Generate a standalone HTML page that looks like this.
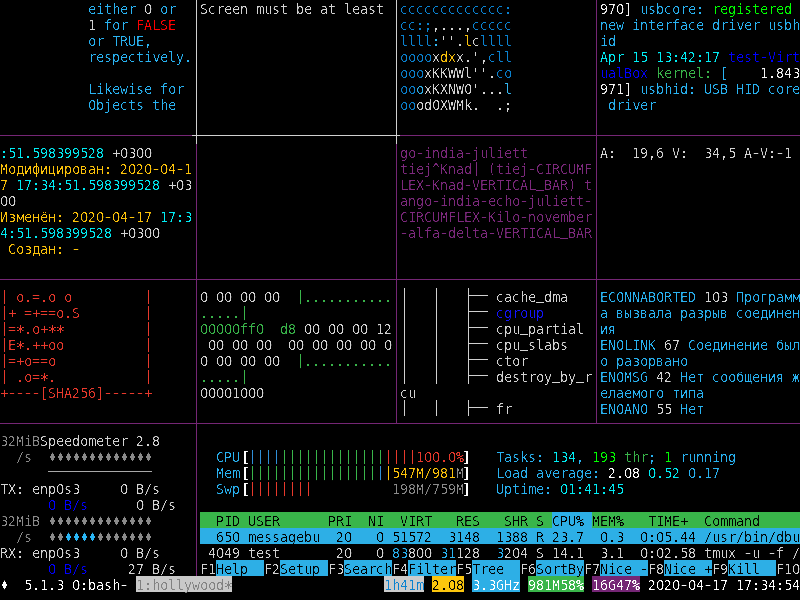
<!DOCTYPE html>
<html lang="en"><head><meta charset="utf-8"><title>hollywood - tmux</title>
<style>
html,body{margin:0;padding:0;background:#000}
body{width:800px;height:600px;overflow:hidden;position:relative;font-family:"DejaVu Sans Mono","Liberation Mono",monospace;font-size:13.29px;}
#g,#t{position:absolute;left:0;top:0;width:800px;height:600px;overflow:hidden}
#g{background:#000}
#t{filter:url(#sh)}
.l{position:absolute;display:block}
.s{position:absolute;display:block;height:16px;line-height:20px;white-space:pre;overflow:visible}
.b{-webkit-text-stroke:.6px currentColor}
.br{margin-left:1.4px}
.brr{margin-left:-1.6px}
.dia{font-size:11.5px;letter-spacing:1.077px;margin-left:1px;transform:translateY(-1.5px) scaleY(1.43);transform-origin:0 9px}
b{font-weight:inherit;position:relative}
.p1{left:.25px}.p2{left:.5px}.m1{left:-.25px}
.bar{left:.5px;top:-1px}
.us{top:-3px;-webkit-text-stroke:.4px currentColor}
.pc{-webkit-text-stroke:.35px currentColor}
.eq{-webkit-text-stroke:.2px currentColor}
.z{font-family:"DejaVu Sans","Liberation Sans",sans-serif;letter-spacing:-.455px}
.ast{font-size:17px;line-height:0;letter-spacing:-2.234px;left:-.7px;top:4.3px}
.hy{display:inline-block;width:8px;transform:scaleX(1.5);transform-origin:4px 0}
</style></head>
<body>
<svg width="0" height="0" style="position:absolute"><defs><filter id="sh" x="0" y="0" width="100%" height="100%" color-interpolation-filters="sRGB"><feComponentTransfer><feFuncA type="linear" slope="4.0" intercept="-2.0"/></feComponentTransfer></filter></defs></svg>
<div id="g">
<i class="l" style="left:196px;top:0px;width:1px;height:144px;background:#d0d0d0"></i>
<i class="l" style="left:196px;top:144px;width:1px;height:432px;background:#752675"></i>
<i class="l" style="left:396px;top:0px;width:1px;height:144px;background:#d0d0d0"></i>
<i class="l" style="left:396px;top:144px;width:1px;height:280px;background:#752675"></i>
<i class="l" style="left:596px;top:0px;width:1px;height:424px;background:#752675"></i>
<i class="l" style="left:0px;top:135px;width:192px;height:1px;background:#752675"></i>
<i class="l" style="left:192px;top:135px;width:208px;height:1px;background:#d0d0d0"></i>
<i class="l" style="left:400px;top:135px;width:400px;height:1px;background:#752675"></i>
<i class="l" style="left:0px;top:279px;width:800px;height:1px;background:#752675"></i>
<i class="l" style="left:0px;top:423px;width:800px;height:1px;background:#752675"></i>
<i class="l" style="left:468px;top:295px;width:20px;height:1px;background:#d0d0d0"></i>
<i class="l" style="left:468px;top:311px;width:20px;height:1px;background:#d0d0d0"></i>
<i class="l" style="left:468px;top:327px;width:20px;height:1px;background:#d0d0d0"></i>
<i class="l" style="left:468px;top:343px;width:20px;height:1px;background:#d0d0d0"></i>
<i class="l" style="left:468px;top:359px;width:20px;height:1px;background:#d0d0d0"></i>
<i class="l" style="left:468px;top:375px;width:20px;height:1px;background:#d0d0d0"></i>
<i class="l" style="left:404px;top:288px;width:1px;height:96px;background:#d0d0d0"></i>
<i class="l" style="left:436px;top:288px;width:1px;height:96px;background:#d0d0d0"></i>
<i class="l" style="left:468px;top:288px;width:1px;height:96px;background:#d0d0d0"></i>
<i class="l" style="left:404px;top:400px;width:1px;height:16px;background:#d0d0d0"></i>
<i class="l" style="left:436px;top:400px;width:1px;height:16px;background:#d0d0d0"></i>
<i class="l" style="left:468px;top:400px;width:1px;height:16px;background:#d0d0d0"></i>
<i class="l" style="left:468px;top:407px;width:20px;height:1px;background:#d0d0d0"></i>
<i class="l" style="left:48px;top:471px;width:104px;height:1px;background:#a8a8a8"></i>
<i class="l" style="left:200px;top:512px;width:352px;height:16px;background:#39b54a"></i>
<i class="l" style="left:552px;top:512px;width:40px;height:16px;background:#2dafe6"></i>
<i class="l" style="left:592px;top:512px;width:208px;height:16px;background:#39b54a"></i>
<i class="l" style="left:200px;top:528px;width:600px;height:16px;background:#2dafe6"></i>
<i class="l" style="left:216px;top:560px;width:48px;height:16px;background:#2dafe6"></i>
<i class="l" style="left:280px;top:560px;width:48px;height:16px;background:#2dafe6"></i>
<i class="l" style="left:344px;top:560px;width:48px;height:16px;background:#2dafe6"></i>
<i class="l" style="left:408px;top:560px;width:48px;height:16px;background:#2dafe6"></i>
<i class="l" style="left:472px;top:560px;width:48px;height:16px;background:#2dafe6"></i>
<i class="l" style="left:536px;top:560px;width:48px;height:16px;background:#2dafe6"></i>
<i class="l" style="left:600px;top:560px;width:48px;height:16px;background:#2dafe6"></i>
<i class="l" style="left:664px;top:560px;width:48px;height:16px;background:#2dafe6"></i>
<i class="l" style="left:728px;top:560px;width:48px;height:16px;background:#2dafe6"></i>
<i class="l" style="left:136px;top:576px;width:96px;height:16px;background:#c9c9c9"></i>
<i class="l" style="left:384px;top:576px;width:40px;height:16px;background:#cccccc"></i>
<i class="l" style="left:432px;top:576px;width:32px;height:16px;background:#fcc60d"></i>
<i class="l" style="left:472px;top:576px;width:48px;height:16px;background:#2dafe6"></i>
<i class="l" style="left:528px;top:576px;width:56px;height:16px;background:#39b54a"></i>
<i class="l" style="left:592px;top:576px;width:48px;height:16px;background:#752675"></i>
</div>
<div id="t">
<div class="r"><span class="s" style="left:88px;top:0px;color:#29b3f2"><b class="p1">ei</b>t<b class="p2">h</b><b class="p1">e</b><b class="p2">r</b> </span><span class="s" style="left:144px;top:0px;color:#d3d3d3"><b class="z">0</b></span><span class="s" style="left:152px;top:0px;color:#29b3f2"> <b class="p1">o</b><b class="p2">r</b></span></div>
<div class="r"><span class="s" style="left:88px;top:16px;color:#d3d3d3">1</span><span class="s" style="left:96px;top:16px;color:#29b3f2"> f<b class="p1">o</b><b class="p2">r</b> </span><span class="s" style="left:136px;top:16px;color:#ff0000"><b class="p1">F</b>A<b class="p2">L</b>SE</span></div>
<div class="r"><span class="s" style="left:88px;top:32px;color:#29b3f2"><b class="p1">o</b><b class="p2">r</b> <b class="p2">T</b>RUE,</span></div>
<div class="r"><span class="s" style="left:88px;top:48px;color:#29b3f2"><b class="p2">r</b><b class="p1">e</b>sp<b class="p1">e</b><b class="m1">c</b>t<b class="p1">i</b><b class="p2">v</b><b class="p1">e</b>ly.</span></div>
<div class="r"><span class="s" style="left:88px;top:80px;color:#29b3f2"><b class="p2">L</b><b class="p1">ike</b>w<b class="p1">i</b>s<b class="p1">e</b> f<b class="p1">o</b><b class="p2">r</b></span></div>
<div class="r"><span class="s" style="left:88px;top:96px;color:#29b3f2"><b class="p1">O</b>bj<b class="p1">e</b><b class="m1">c</b>ts t<b class="p2">h</b><b class="p1">e</b></span></div>
<div class="r"><span class="s" style="left:200px;top:0px;color:#d3d3d3">S<b class="m1">c</b><b class="p2">r</b><b class="p1">ee</b>n <b class="p2">mu</b>st b<b class="p1">e</b> at l<b class="p1">e</b>ast</span></div>
<div class="r"><span class="s" style="left:400px;top:0px;color:#0a82d0"><b class="m1">ccccccccccccc</b>:</span></div>
<div class="r"><span class="s" style="left:400px;top:16px;color:#0a82d0"><b class="m1">cc</b>:;</span><span class="s" style="left:432px;top:16px;color:#d3d3d3">,...,</span><span class="s" style="left:472px;top:16px;color:#0a82d0"><b class="m1">ccccc</b></span></div>
<div class="r"><span class="s" style="left:400px;top:32px;color:#0a82d0">llll</span><span class="s" style="left:432px;top:32px;color:#33b5ee">:</span><span class="s" style="left:440px;top:32px;color:#d3d3d3"><b class="m1">&#x27;&#x27;</b>.</span><span class="s" style="left:464px;top:32px;color:#fdc30a">l</span><span class="s" style="left:472px;top:32px;color:#d3d3d3"><b class="m1">c</b></span><span class="s" style="left:480px;top:32px;color:#0a82d0">llll</span></div>
<div class="r"><span class="s" style="left:400px;top:48px;color:#0a82d0"><b class="p1">oooo</b></span><span class="s" style="left:432px;top:48px;color:#d3d3d3">x</span><span class="s" style="left:440px;top:48px;color:#fdc30a">dx</span><span class="s" style="left:456px;top:48px;color:#d3d3d3">x.<b class="m1">&#x27;</b>,</span><span class="s" style="left:488px;top:48px;color:#0a82d0"><b class="m1">c</b>ll</span></div>
<div class="r"><span class="s" style="left:400px;top:64px;color:#0a82d0"><b class="p1">ooo</b></span><span class="s" style="left:424px;top:64px;color:#d3d3d3">x<b class="m1">KK</b>WWl<b class="m1">&#x27;&#x27;</b>.</span><span class="s" style="left:496px;top:64px;color:#0a82d0"><b class="m1">c</b><b class="p1">o</b></span></div>
<div class="r"><span class="s" style="left:400px;top:80px;color:#0a82d0"><b class="p1">oo</b></span><span class="s" style="left:416px;top:80px;color:#33b5ee"><b class="p1">o</b></span><span class="s" style="left:424px;top:80px;color:#d3d3d3">x<b class="m1">K</b>XNW<b class="p1">O</b><b class="m1">&#x27;</b>...</span><span class="s" style="left:504px;top:80px;color:#33b5ee">l</span></div>
<div class="r"><span class="s" style="left:400px;top:96px;color:#0a82d0"><b class="p1">oo</b></span><span class="s" style="left:416px;top:96px;color:#d3d3d3"><b class="p1">o</b>d<b class="p1">O</b>XWM<b class="p1">k</b>.  .;</span></div>
<div class="r"><span class="s" style="left:600px;top:0px;color:#f4f4f4">97<b class="z">0</b>]</span><span class="s" style="left:632px;top:0px;color:#29b3f2"> <b class="p2">u</b>sb<b class="m1">c</b><b class="p1">o</b><b class="p2">r</b><b class="p1">e</b>: </span><span class="s" style="left:712px;top:0px;color:#00ff00"><b class="p2">r</b><b class="p1">e</b>g<b class="p1">i</b>st<b class="p1">e</b><b class="p2">r</b><b class="p1">e</b>d</span></div>
<div class="r"><span class="s" style="left:600px;top:16px;color:#29b3f2">n<b class="p1">e</b>w <b class="p1">i</b>nt<b class="p1">e</b><b class="p2">r</b>fa<b class="m1">c</b><b class="p1">e</b> d<b class="p2">r</b><b class="p1">i</b><b class="p2">v</b><b class="p1">e</b><b class="p2">r</b> <b class="p2">u</b>sb<b class="p2">h</b></span></div>
<div class="r"><span class="s" style="left:600px;top:32px;color:#29b3f2"><b class="p1">i</b>d</span></div>
<div class="r"><span class="s" style="left:600px;top:48px;color:#00ecf4">Ap<b class="p2">r</b> 1<b class="p2">5</b> 1<b class="p2">3</b>:4<b class="m1">2</b>:17</span><span class="s" style="left:720px;top:48px;color:#0000ff"> t<b class="p1">e</b>st<b class="hy">-</b>V<b class="p1">i</b><b class="p2">r</b>t</span></div>
<div class="r"><span class="s" style="left:600px;top:64px;color:#0000ff"><b class="p2">u</b>alB<b class="p1">o</b>x</span><span class="s" style="left:648px;top:64px;color:#39b54a"> <b class="p1">ke</b><b class="p2">r</b>n<b class="p1">e</b>l:</span><span class="s" style="left:712px;top:64px;color:#29b3f2"> [</span><span class="s" style="left:728px;top:64px;color:#f4f4f4">    1.84<b class="p2">3</b></span></div>
<div class="r"><span class="s" style="left:600px;top:80px;color:#f4f4f4">971]</span><span class="s" style="left:632px;top:80px;color:#29b3f2"> <b class="p2">u</b>sb<b class="p2">h</b><b class="p1">i</b>d: USB H<b class="p2">I</b>D <b class="m1">c</b><b class="p1">o</b><b class="p2">r</b><b class="p1">e</b></span></div>
<div class="r"><span class="s" style="left:600px;top:96px;color:#29b3f2"> d<b class="p2">r</b><b class="p1">i</b><b class="p2">v</b><b class="p1">e</b><b class="p2">r</b></span></div>
<div class="r"><span class="s" style="left:0px;top:144px;color:#00ecf4">:<b class="p2">5</b>1.<b class="p2">5</b>98<b class="p2">3</b>99<b class="p2">5</b><b class="m1">2</b>8</span><span class="s" style="left:104px;top:144px;color:#d3d3d3"> <b class="p2">+</b><b class="z">0</b><b class="p2">3</b><b class="z">00</b></span></div>
<div class="r"><span class="s" style="left:0px;top:160px;color:#fdc30a">М<b class="p1">о</b><b class="p2">д</b>и<b class="p1">ф</b>ицир<b class="p1">о</b><b class="m1">в</b>ан: <b class="m1">2</b><b class="z">0</b><b class="m1">2</b><b class="z">0</b><b class="hy">-</b><b class="z">0</b>4<b class="hy">-</b>1</span></div>
<div class="r"><span class="s" style="left:0px;top:176px;color:#fdc30a">7</span><span class="s" style="left:8px;top:176px;color:#00ecf4"> 17:<b class="p2">3</b>4:<b class="p2">5</b>1.<b class="p2">5</b>98<b class="p2">3</b>99<b class="p2">5</b><b class="m1">2</b>8</span><span class="s" style="left:160px;top:176px;color:#d3d3d3"> <b class="p2">+</b><b class="z">0</b><b class="p2">3</b></span></div>
<div class="r"><span class="s" style="left:0px;top:192px;color:#d3d3d3"><b class="z">00</b></span></div>
<div class="r"><span class="s" style="left:0px;top:208px;color:#fdc30a">И<b class="p1">з</b><b class="p2">м</b><b class="p1">е</b>н<b class="p1">ё</b>н: <b class="m1">2</b><b class="z">0</b><b class="m1">2</b><b class="z">0</b><b class="hy">-</b><b class="z">0</b>4<b class="hy">-</b>17</span><span class="s" style="left:152px;top:208px;color:#00ecf4"> 17:<b class="p2">3</b></span></div>
<div class="r"><span class="s" style="left:0px;top:224px;color:#00ecf4">4:<b class="p2">5</b>1.<b class="p2">5</b>98<b class="p2">3</b>99<b class="p2">5</b><b class="m1">2</b>8</span><span class="s" style="left:112px;top:224px;color:#d3d3d3"> <b class="p2">+</b><b class="z">0</b><b class="p2">3</b><b class="z">00</b></span></div>
<div class="r"><span class="s" style="left:0px;top:240px;color:#fdc30a"> С<b class="p1">оз</b><b class="p2">д</b>ан: <b class="hy">-</b></span></div>
<div class="r"><span class="s" style="left:400px;top:144px;color:#7d297d">g<b class="p1">o</b><b class="hy">-</b><b class="p1">i</b>nd<b class="p1">i</b>a<b class="hy">-</b>j<b class="p2">u</b>l<b class="p1">ie</b>tt</span></div>
<div class="r"><span class="s" style="left:400px;top:160px;color:#7d297d">t<b class="p1">ie</b>j^<b class="m1">K</b>nad<b class="bar">|</b> <b class="m1">(</b>t<b class="p1">ie</b>j<b class="hy">-</b>C<b class="p2">I</b>RCUM<b class="p1">F</b></span></div>
<div class="r"><span class="s" style="left:400px;top:176px;color:#7d297d"><b class="p2">L</b>EX<b class="hy">-</b><b class="m1">K</b>nad<b class="hy">-</b>VER<b class="p2">TI</b>CA<b class="p2">L</b><b class="us">_</b>BAR<b class="p1">)</b> t</span></div>
<div class="r"><span class="s" style="left:400px;top:192px;color:#7d297d">ang<b class="p1">o</b><b class="hy">-</b><b class="p1">i</b>nd<b class="p1">i</b>a<b class="hy">-</b><b class="p1">e</b><b class="m1">c</b><b class="p2">h</b><b class="p1">o</b><b class="hy">-</b>j<b class="p2">u</b>l<b class="p1">ie</b>tt<b class="hy">-</b></span></div>
<div class="r"><span class="s" style="left:400px;top:208px;color:#7d297d">C<b class="p2">I</b>RCUM<b class="p1">F</b><b class="p2">L</b>EX<b class="hy">-</b><b class="m1">K</b><b class="p1">i</b>l<b class="p1">o</b><b class="hy">-</b>n<b class="p1">o</b><b class="p2">v</b><b class="p1">e</b><b class="p2">m</b>b<b class="p1">e</b><b class="p2">r</b></span></div>
<div class="r"><span class="s" style="left:400px;top:224px;color:#7d297d"><b class="hy">-</b>alfa<b class="hy">-</b>d<b class="p1">e</b>lta<b class="hy">-</b>VER<b class="p2">TI</b>CA<b class="p2">L</b><b class="us">_</b>BAR</span></div>
<div class="r"><span class="s" style="left:600px;top:144px;color:#d3d3d3">A:  19,6 V:  <b class="p2">3</b>4,<b class="p2">5</b> A<b class="hy">-</b>V:<b class="hy">-</b>1</span></div>
<div class="r"><span class="s" style="left:0px;top:288px;color:#e8392c"><b class="bar">|</b> <b class="p1">o</b>.<b class="eq">=</b>.<b class="p1">o</b> <b class="p1">o</b>         <b class="bar">|</b></span></div>
<div class="r"><span class="s" style="left:0px;top:304px;color:#e8392c"><b class="bar">|</b><b class="p2">+</b> <b class="eq">=</b><b class="p2">+</b><b class="eq">==</b><b class="p1">o</b>.S        <b class="bar">|</b></span></div>
<div class="r"><span class="s" style="left:0px;top:320px;color:#e8392c"><b class="bar">|</b><b class="eq">=</b><b class="ast">*</b>.<b class="p1">o</b><b class="p2">+</b><b class="ast">**</b>          <b class="bar">|</b></span></div>
<div class="r"><span class="s" style="left:0px;top:336px;color:#e8392c"><b class="bar">|</b>E<b class="ast">*</b>.<b class="p2">++</b><b class="p1">oo</b>          <b class="bar">|</b></span></div>
<div class="r"><span class="s" style="left:0px;top:352px;color:#e8392c"><b class="bar">|</b><b class="eq">=</b><b class="p2">+</b><b class="p1">o</b><b class="eq">==</b><b class="p1">o</b>           <b class="bar">|</b></span></div>
<div class="r"><span class="s" style="left:0px;top:368px;color:#e8392c"><b class="bar">|</b> .<b class="p1">o</b><b class="eq">=</b><b class="ast">*</b>.           <b class="bar">|</b></span></div>
<div class="r"><span class="s" style="left:0px;top:384px;color:#e8392c"><b class="p2">+</b><b class="hy">-</b><b class="hy">-</b><b class="hy">-</b><b class="hy">-</b>[SHA<b class="m1">2</b><b class="p2">5</b>6]<b class="hy">-</b><b class="hy">-</b><b class="hy">-</b><b class="hy">-</b><b class="hy">-</b><b class="p2">+</b></span></div>
<div class="r"><span class="s" style="left:200px;top:288px;color:#d3d3d3"><b class="z">0</b> <b class="z">00</b> <b class="z">00</b> <b class="z">00</b>  </span><span class="s" style="left:296px;top:288px;color:#39b54a"><b class="bar">|</b>...........</span></div>
<div class="r"><span class="s" style="left:200px;top:304px;color:#39b54a">.....<b class="bar">|</b></span></div>
<div class="r"><span class="s" style="left:200px;top:320px;color:#39b54a"><b class="z">00000</b>ff<b class="z">0</b>  d8</span><span class="s" style="left:296px;top:320px;color:#d3d3d3"> <b class="z">00</b> <b class="z">00</b> <b class="z">00</b> 1<b class="m1">2</b></span></div>
<div class="r"><span class="s" style="left:200px;top:336px;color:#d3d3d3"> <b class="z">00</b> <b class="z">00</b> <b class="z">00</b>  <b class="z">00</b> <b class="z">00</b> <b class="z">00</b> <b class="z">00</b> <b class="z">0</b></span></div>
<div class="r"><span class="s" style="left:200px;top:352px;color:#d3d3d3"><b class="z">0</b> <b class="z">00</b> <b class="z">00</b> <b class="z">00</b>  </span><span class="s" style="left:296px;top:352px;color:#39b54a"><b class="bar">|</b>...........</span></div>
<div class="r"><span class="s" style="left:200px;top:368px;color:#39b54a">.....<b class="bar">|</b></span></div>
<div class="r"><span class="s" style="left:200px;top:384px;color:#d3d3d3"><b class="z">0000</b>1<b class="z">000</b></span></div>
<div class="r"><span class="s" style="left:496px;top:288px;color:#d3d3d3"><b class="m1">c</b>a<b class="m1">c</b><b class="p2">h</b><b class="p1">e</b><b class="us">_</b>d<b class="p2">m</b>a</span></div>
<div class="r"><span class="s" style="left:496px;top:304px;color:#1414ff"><b class="m1">c</b>g<b class="p2">r</b><b class="p1">o</b><b class="p2">u</b>p</span></div>
<div class="r"><span class="s" style="left:496px;top:320px;color:#d3d3d3"><b class="m1">c</b>p<b class="p2">u</b><b class="us">_</b>pa<b class="p2">r</b>t<b class="p1">i</b>al</span></div>
<div class="r"><span class="s" style="left:496px;top:336px;color:#d3d3d3"><b class="m1">c</b>p<b class="p2">u</b><b class="us">_</b>slabs</span></div>
<div class="r"><span class="s" style="left:496px;top:352px;color:#d3d3d3"><b class="m1">c</b>t<b class="p1">o</b><b class="p2">r</b></span></div>
<div class="r"><span class="s" style="left:496px;top:368px;color:#d3d3d3">d<b class="p1">e</b>st<b class="p2">r</b><b class="p1">o</b>y<b class="us">_</b>by<b class="us">_</b><b class="p2">r</b></span></div>
<div class="r"><span class="s" style="left:400px;top:384px;color:#d3d3d3"><b class="m1">c</b><b class="p2">u</b></span></div>
<div class="r"><span class="s" style="left:496px;top:400px;color:#d3d3d3">f<b class="p2">r</b></span></div>
<div class="r"><span class="s" style="left:600px;top:288px;color:#29b3f2">EC<b class="p1">O</b>NNAB<b class="p1">O</b>R<b class="p2">T</b>ED</span><span class="s" style="left:696px;top:288px;color:#d3d3d3"> 1<b class="z">0</b><b class="p2">3</b></span><span class="s" style="left:728px;top:288px;color:#29b3f2"> Пр<b class="p1">о</b>гра<b class="p2">мм</b></span></div>
<div class="r"><span class="s" style="left:600px;top:304px;color:#29b3f2">а <b class="m1">в</b>ы<b class="p1">з</b><b class="m1">в</b>ала ра<b class="p1">з</b>ры<b class="m1">в</b> <b class="m1">с</b><b class="p1">ое</b><b class="p2">д</b>ин<b class="p1">е</b>н</span></div>
<div class="r"><span class="s" style="left:600px;top:320px;color:#29b3f2">и<b class="m1">я</b></span></div>
<div class="r"><span class="s" style="left:600px;top:336px;color:#29b3f2">EN<b class="p1">O</b><b class="p2">LI</b>N<b class="m1">K</b></span><span class="s" style="left:656px;top:336px;color:#d3d3d3"> 67</span><span class="s" style="left:680px;top:336px;color:#29b3f2"> С<b class="p1">ое</b><b class="p2">д</b>ин<b class="p1">е</b>ни<b class="p1">е</b> <b class="p1">б</b>ыл</span></div>
<div class="r"><span class="s" style="left:600px;top:352px;color:#29b3f2"><b class="p1">о</b> ра<b class="p1">зо</b>р<b class="m1">в</b>ан<b class="p1">о</b></span></div>
<div class="r"><span class="s" style="left:600px;top:368px;color:#29b3f2">EN<b class="p1">O</b>MSG</span><span class="s" style="left:648px;top:368px;color:#d3d3d3"> 4<b class="m1">2</b></span><span class="s" style="left:672px;top:368px;color:#29b3f2"> Н<b class="p1">ет</b> <b class="m1">с</b><b class="p1">ооб</b><b class="p2">щ</b><b class="p1">е</b>ни<b class="m1">я</b> <b class="m1">ж</b></span></div>
<div class="r"><span class="s" style="left:600px;top:384px;color:#29b3f2"><b class="p1">е</b>ла<b class="p1">е</b><b class="p2">м</b><b class="p1">о</b>г<b class="p1">о</b> <b class="p1">т</b>ипа</span></div>
<div class="r"><span class="s" style="left:600px;top:400px;color:#29b3f2">EN<b class="p1">O</b>AN<b class="p1">O</b></span><span class="s" style="left:648px;top:400px;color:#d3d3d3"> <b class="p2">55</b></span><span class="s" style="left:672px;top:400px;color:#29b3f2"> Н<b class="p1">ет</b></span></div>
<div class="r"><span class="s" style="left:0px;top:432px;color:#8a8a8a"><b class="p2">3</b><b class="m1">2</b>M<b class="p1">i</b>B</span><span class="s" style="left:40px;top:432px;color:#d3d3d3">Sp<b class="p1">ee</b>d<b class="p1">o</b><b class="p2">m</b><b class="p1">e</b>t<b class="p1">e</b><b class="p2">r</b> <b class="m1">2</b>.8</span></div>
<div class="r"><span class="s" style="left:0px;top:448px;color:#8a8a8a">  /s  </span><span class="s dia" style="left:48px;top:448px;color:#8a8a8a">♦♦♦♦♦♦♦♦♦♦♦♦♦</span></div>
<div class="r"><span class="s" style="left:0px;top:480px;color:#d3d3d3"><b class="p2">T</b>X: <b class="p1">e</b>np<b class="z">0</b>s<b class="p2">3</b>     <b class="z">0</b> B/s</span></div>
<div class="r"><span class="s" style="left:0px;top:496px;color:#0000ff">      <b class="z">0</b> B/s</span><span class="s" style="left:88px;top:496px;color:#d3d3d3">      <b class="z">0</b> B/s</span></div>
<div class="r"><span class="s" style="left:0px;top:512px;color:#8a8a8a"><b class="p2">3</b><b class="m1">2</b>M<b class="p1">i</b>B </span><span class="s dia" style="left:48px;top:512px;color:#8a8a8a">♦♦♦♦♦♦♦♦♦♦♦♦♦</span></div>
<div class="r"><span class="s" style="left:0px;top:528px;color:#8a8a8a">  /s  </span><span class="s dia" style="left:48px;top:528px;color:#8a8a8a">♦♦</span><span class="s dia" style="left:64px;top:528px;color:#29b6f6">♦♦♦♦</span><span class="s dia" style="left:96px;top:528px;color:#8a8a8a">♦♦♦♦♦♦♦</span></div>
<div class="r"><span class="s" style="left:0px;top:544px;color:#d3d3d3">RX: <b class="p1">e</b>np<b class="z">0</b>s<b class="p2">3</b>     <b class="z">0</b> B/s</span></div>
<div class="r"><span class="s" style="left:0px;top:560px;color:#0000ff">      <b class="z">0</b> B/s</span><span class="s" style="left:88px;top:560px;color:#d3d3d3">     <b class="m1">2</b>7 B/s</span></div>
<div class="r"><span class="s" style="left:216px;top:448px;color:#29b3f2">C<b class="m1">P</b>U</span><span class="s b br" style="left:240px;top:448px;color:#ffffff">[</span><span class="s" style="left:248px;top:448px;color:#2f8fd8"><b class="bar">||||</b></span><span class="s" style="left:280px;top:448px;color:#39b54a"><b class="bar">|||||||||||||</b></span><span class="s" style="left:384px;top:448px;color:#e8392c"><b class="bar">||||</b></span><span class="s" style="left:416px;top:448px;color:#e8392c">1<b class="z">00</b>.<b class="z">0</b><b class="pc">%</b></span><span class="s b brr" style="left:464px;top:448px;color:#ffffff">]</span></div>
<div class="r"><span class="s" style="left:216px;top:464px;color:#29b3f2">M<b class="p1">e</b><b class="p2">m</b></span><span class="s b br" style="left:240px;top:464px;color:#ffffff">[</span><span class="s" style="left:248px;top:464px;color:#39b54a"><b class="bar">||||||||||||||||</b></span><span class="s" style="left:376px;top:464px;color:#2f8fd8"><b class="bar">|</b></span><span class="s" style="left:384px;top:464px;color:#fdc30a"><b class="bar">|</b></span><span class="s" style="left:392px;top:464px;color:#fdc30a"><b class="p2">5</b>47M/981</span><span class="s" style="left:456px;top:464px;color:#8a8a8a">M</span><span class="s b brr" style="left:464px;top:464px;color:#ffffff">]</span></div>
<div class="r"><span class="s" style="left:216px;top:480px;color:#29b3f2">Swp</span><span class="s b br" style="left:240px;top:480px;color:#ffffff">[</span><span class="s" style="left:248px;top:480px;color:#e8392c"><b class="bar">||||||||</b></span><span class="s" style="left:312px;top:480px;color:#e8392c">          </span><span class="s" style="left:392px;top:480px;color:#8a8a8a">198M/7<b class="p2">5</b>9M</span><span class="s b brr" style="left:464px;top:480px;color:#ffffff">]</span></div>
<div class="r"><span class="s" style="left:496px;top:448px;color:#29b3f2"><b class="p2">T</b>as<b class="p1">k</b>s: </span><span class="s" style="left:552px;top:448px;color:#00ecf4">1<b class="p2">3</b>4</span><span class="s" style="left:576px;top:448px;color:#29b3f2">, </span><span class="s" style="left:592px;top:448px;color:#00ff00">19<b class="p2">3</b></span><span class="s" style="left:616px;top:448px;color:#39b54a"> t<b class="p2">hr</b></span><span class="s" style="left:648px;top:448px;color:#29b3f2">; </span><span class="s" style="left:664px;top:448px;color:#00ff00">1</span><span class="s" style="left:672px;top:448px;color:#29b3f2"> <b class="p2">ru</b>nn<b class="p1">i</b>ng</span></div>
<div class="r"><span class="s" style="left:496px;top:464px;color:#29b3f2"><b class="p2">L</b><b class="p1">o</b>ad a<b class="p2">v</b><b class="p1">e</b><b class="p2">r</b>ag<b class="p1">e</b>: </span><span class="s" style="left:608px;top:464px;color:#ffffff"><b class="m1">2</b>.<b class="z">0</b>8</span><span class="s" style="left:640px;top:464px;color:#00ecf4"> <b class="z">0</b>.<b class="p2">5</b><b class="m1">2</b></span><span class="s" style="left:680px;top:464px;color:#29b3f2"> <b class="z">0</b>.17</span></div>
<div class="r"><span class="s" style="left:496px;top:480px;color:#29b3f2">Upt<b class="p1">i</b><b class="p2">m</b><b class="p1">e</b>: </span><span class="s" style="left:560px;top:480px;color:#00ecf4"><b class="z">0</b>1:41:4<b class="p2">5</b></span></div>
<div class="r"><span class="s" style="left:200px;top:512px;color:#000000">  <b class="m1">P</b><b class="p2">I</b>D USER      <b class="m1">P</b>R<b class="p2">I</b>  N<b class="p2">I</b>  V<b class="p2">I</b>R<b class="p2">T</b>   RES   SHR S </span><span class="s" style="left:552px;top:512px;color:#000000">C<b class="m1">P</b>U<b class="pc">%</b> </span><span class="s" style="left:592px;top:512px;color:#000000">MEM<b class="pc">%</b>   <b class="p2">TI</b>ME<b class="p2">+</b>  C<b class="p1">o</b><b class="p2">mm</b>and     </span></div>
<div class="r"><span class="s" style="left:200px;top:528px;color:#000000">  6<b class="p2">5</b><b class="z">0</b> <b class="p2">m</b><b class="p1">e</b>ssag<b class="p1">e</b>b<b class="p2">u</b>  <b class="m1">2</b><b class="z">0</b>   <b class="z">0</b> <b class="p2">5</b>1<b class="p2">5</b>7<b class="m1">2</b>  <b class="p2">3</b>148  1<b class="p2">3</b>88 R <b class="m1">2</b><b class="p2">3</b>.7  <b class="z">0</b>.<b class="p2">3</b>  <b class="z">0</b>:<b class="z">0</b><b class="p2">5</b>.44 /<b class="p2">u</b>s<b class="p2">r</b>/b<b class="p1">i</b>n/db<b class="p2">u</b></span></div>
<div class="r"><span class="s" style="left:200px;top:544px;color:#d3d3d3"> 4<b class="z">0</b>49 t<b class="p1">e</b>st       <b class="m1">2</b><b class="z">0</b>   <b class="z">0</b> </span><span class="s" style="left:392px;top:544px;color:#29b3f2">8<b class="p2">3</b></span><span class="s" style="left:408px;top:544px;color:#d3d3d3">8<b class="z">00</b> </span><span class="s" style="left:440px;top:544px;color:#29b3f2"><b class="p2">3</b>1</span><span class="s" style="left:456px;top:544px;color:#d3d3d3">1<b class="m1">2</b>8  </span><span class="s" style="left:496px;top:544px;color:#29b3f2"><b class="p2">3</b></span><span class="s" style="left:504px;top:544px;color:#d3d3d3"><b class="m1">2</b><b class="z">0</b>4 S 14.1  <b class="p2">3</b>.1  <b class="z">0</b>:<b class="z">0</b><b class="m1">2</b>.<b class="p2">5</b>8 t<b class="p2">mu</b>x <b class="hy">-</b><b class="p2">u</b> <b class="hy">-</b>f /</span></div>
<div class="r"><span class="s" style="left:200px;top:560px;color:#d3d3d3"><b class="p1">F</b>1</span><span class="s" style="left:216px;top:560px;color:#000000">H<b class="p1">e</b>lp  </span><span class="s" style="left:264px;top:560px;color:#d3d3d3"><b class="p1">F</b><b class="m1">2</b></span><span class="s" style="left:280px;top:560px;color:#000000">S<b class="p1">e</b>t<b class="p2">u</b>p </span><span class="s" style="left:328px;top:560px;color:#d3d3d3"><b class="p1">F</b><b class="p2">3</b></span><span class="s" style="left:344px;top:560px;color:#000000">S<b class="p1">e</b>a<b class="p2">r</b><b class="m1">c</b><b class="p2">h</b></span><span class="s" style="left:392px;top:560px;color:#d3d3d3"><b class="p1">F</b>4</span><span class="s" style="left:408px;top:560px;color:#000000"><b class="p1">Fi</b>lt<b class="p1">e</b><b class="p2">r</b></span><span class="s" style="left:456px;top:560px;color:#d3d3d3"><b class="p1">F</b><b class="p2">5</b></span><span class="s" style="left:472px;top:560px;color:#000000"><b class="p2">Tr</b><b class="p1">ee</b>  </span><span class="s" style="left:520px;top:560px;color:#d3d3d3"><b class="p1">F</b>6</span><span class="s" style="left:536px;top:560px;color:#000000">S<b class="p1">o</b><b class="p2">r</b>tBy</span><span class="s" style="left:584px;top:560px;color:#d3d3d3"><b class="p1">F</b>7</span><span class="s" style="left:600px;top:560px;color:#000000">N<b class="p1">i</b><b class="m1">c</b><b class="p1">e</b> <b class="hy">-</b></span><span class="s" style="left:648px;top:560px;color:#d3d3d3"><b class="p1">F</b>8</span><span class="s" style="left:664px;top:560px;color:#000000">N<b class="p1">i</b><b class="m1">c</b><b class="p1">e</b> <b class="p2">+</b></span><span class="s" style="left:712px;top:560px;color:#d3d3d3"><b class="p1">F</b>9</span><span class="s" style="left:728px;top:560px;color:#000000"><b class="m1">K</b><b class="p1">i</b>ll  </span><span class="s" style="left:776px;top:560px;color:#d3d3d3"><b class="p1">F</b>1<b class="z">0</b></span></div>
<div class="r"><span class="s dia" style="left:0px;top:576px;color:#ffffff">♦</span><span class="s" style="left:8px;top:576px;color:#d3d3d3">  </span><span class="s" style="left:24px;top:576px;color:#ffffff"><b class="p2">5</b>.1.<b class="p2">3</b> <b class="z">0</b>:bas<b class="p2">h</b><b class="hy">-</b> </span><span class="s" style="left:136px;top:576px;color:#808080">1:<b class="p2">h</b><b class="p1">o</b>llyw<b class="p1">oo</b>d<b class="ast">*</b></span><span class="s" style="left:232px;top:576px;color:#d3d3d3">                   </span><span class="s" style="left:384px;top:576px;color:#0a82d0">1<b class="p2">h</b>41<b class="p2">m</b></span><span class="s" style="left:424px;top:576px;color:#d3d3d3"> </span><span class="s" style="left:432px;top:576px;color:#000000"><b class="m1">2</b>.<b class="z">0</b>8</span><span class="s" style="left:464px;top:576px;color:#d3d3d3"> </span><span class="s" style="left:472px;top:576px;color:#ffffff"><b class="p2">3</b>.<b class="p2">3</b>GHz</span><span class="s" style="left:520px;top:576px;color:#d3d3d3"> </span><span class="s" style="left:528px;top:576px;color:#ffffff">981M<b class="p2">5</b>8<b class="pc">%</b></span><span class="s" style="left:584px;top:576px;color:#d3d3d3"> </span><span class="s" style="left:592px;top:576px;color:#ffffff">16G47<b class="pc">%</b></span><span class="s" style="left:640px;top:576px;color:#d3d3d3"> </span><span class="s" style="left:648px;top:576px;color:#ffffff"><b class="m1">2</b><b class="z">0</b><b class="m1">2</b><b class="z">0</b><b class="hy">-</b><b class="z">0</b>4<b class="hy">-</b>17 17:<b class="p2">3</b>4:<b class="p2">5</b>4</span></div>
</div>
</body></html>
